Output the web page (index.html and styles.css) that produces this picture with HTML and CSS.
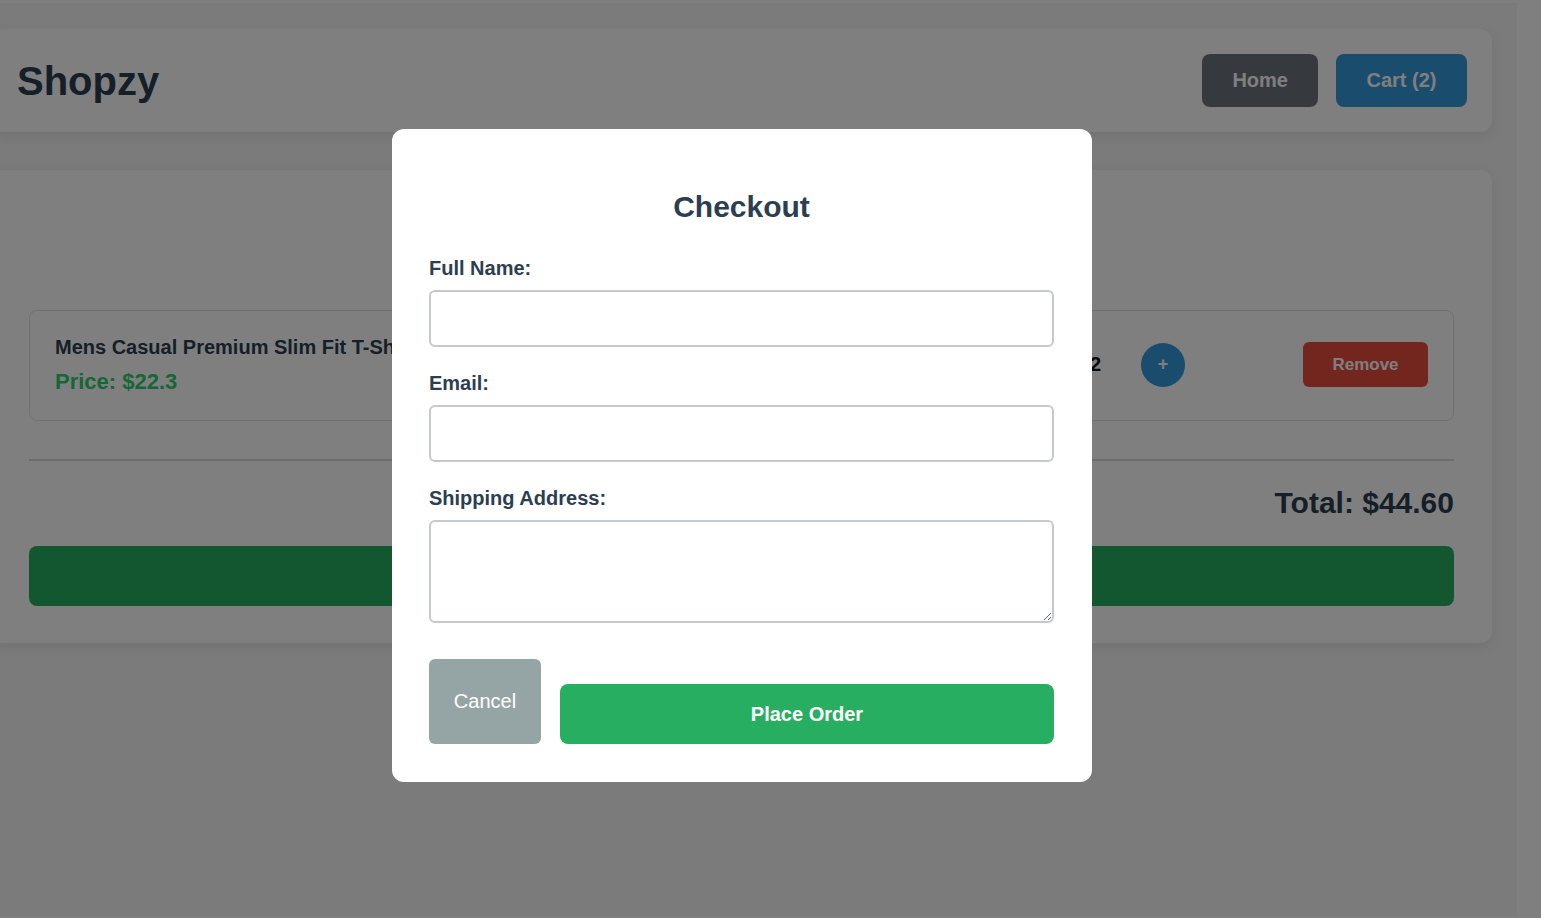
FILE: index.html
```html
<!DOCTYPE html>
<html lang="en">
<head>
<meta charset="utf-8">
<title>Shopzy - Cart</title>
<link rel="stylesheet" href="styles.css">
</head>
<body>
<div class="app">
  <div class="page">
    <header class="site-header">
      <h1 class="logo">Shopzy</h1>
      <nav class="nav">
        <button class="nav-btn nav-home">Home</button>
        <button class="nav-btn nav-cart">Cart (2)</button>
      </nav>
    </header>

    <main class="cart-card">
      <div class="cart-title-space"></div>
      <div class="cart-item">
        <div class="item-info">
          <div class="item-name">Mens Casual Premium Slim Fit T-Shirts</div>
          <div class="item-price">Price: $22.3</div>
        </div>
        <div class="item-actions">
          <div class="qty">
            <button class="qty-btn">−</button>
            <span class="qty-value">2</span>
            <button class="qty-btn">+</button>
          </div>
          <button class="remove-btn">Remove</button>
        </div>
      </div>
      <div class="cart-summary">
        <div class="total">Total: $44.60</div>
        <button class="checkout-btn">Proceed to Checkout</button>
      </div>
    </main>
  </div>
</div>

<div class="overlay">
  <div class="modal">
    <h2 class="modal-title">Checkout</h2>
    <div class="form-group">
      <label class="form-label" for="name">Full Name:</label>
      <input class="form-input" id="name" type="text">
    </div>
    <div class="form-group">
      <label class="form-label" for="email">Email:</label>
      <input class="form-input" id="email" type="email">
    </div>
    <div class="form-group">
      <label class="form-label" for="addr">Shipping Address:</label>
      <textarea class="form-textarea" id="addr"></textarea>
    </div>
    <div class="modal-actions">
      <button class="cancel-btn">Cancel</button>
      <button class="place-btn">Place Order</button>
    </div>
  </div>
</div>
</body>
</html>
```
FILE: styles.css
```css
html {
  background: #ffffff;
}
body {
  margin: 0;
  font-family: "Liberation Sans", Arial, sans-serif;
  color: #2c3e50;
  overflow: hidden;
}
.app {
  margin-top: 3px;
  width: 1517px;
  height: 913px;
  background: #f6f6f6;
  overflow: hidden;
}
.page {
  margin-left: -9px;
  width: 1501px;
  padding-top: 26px;
}
.site-header {
  display: flex;
  align-items: center;
  justify-content: space-between;
  background: #ffffff;
  border-radius: 12px;
  padding: 25px 25px 25px 26px;
  box-shadow: 0 4px 12px rgba(0, 0, 0, 0.08);
}
.logo {
  margin: 0;
  font-size: 40px;
  line-height: 46px;
  font-weight: bold;
  color: #2c3e50;
}
.nav {
  display: flex;
  gap: 18px;
}
.nav-btn {
  font-family: "Liberation Sans", Arial, sans-serif;
  font-size: 20px;
  line-height: 23px;
  font-weight: bold;
  color: #ffffff;
  border: none;
  border-radius: 8px;
  padding: 15px 30px;
}
.nav-home {
  background: #6c757d;
}
.nav-cart {
  background: #3498db;
  padding: 15px 30.5px;
}
.cart-card {
  display: block;
  margin-top: 38px;
  background: #ffffff;
  border-radius: 12px;
  padding: 38px 38px 37px 38px;
  box-shadow: 0 4px 12px rgba(0, 0, 0, 0.08);
}
.cart-title-space {
  height: 102px;
}
.cart-item {
  display: flex;
  align-items: center;
  justify-content: space-between;
  border: 1px solid #e2e2e2;
  border-radius: 8px;
  padding: 24.5px 25px 26.5px;
}
.item-name {
  font-size: 20px;
  line-height: 23px;
  font-weight: bold;
  color: #2c3e50;
}
.item-price {
  margin-top: 10px;
  font-size: 22px;
  line-height: 25px;
  font-weight: bold;
  color: #2ecc71;
}
.item-actions {
  display: flex;
  align-items: center;
}
.qty {
  display: flex;
  align-items: center;
  gap: 40px;
  margin-right: 118px;
}
.qty-value {
  font-size: 20px;
  font-weight: bold;
  color: #111111;
}
.qty-btn {
  width: 44px;
  height: 44px;
  border-radius: 50%;
  border: none;
  background: #3498db;
  color: #ffffff;
  font-family: "Liberation Sans", Arial, sans-serif;
  font-size: 18px;
  font-weight: bold;
  padding: 0;
}
.remove-btn {
  width: 125px;
  height: 45px;
  border: none;
  border-radius: 6px;
  background: #e74c3c;
  color: #ffffff;
  font-family: "Liberation Sans", Arial, sans-serif;
  font-size: 17px;
  font-weight: bold;
}
.cart-summary {
  margin-top: 38px;
  border-top: 2px solid #d6d9dd;
  padding-top: 25px;
}
.total {
  text-align: right;
  font-size: 30px;
  line-height: 34px;
  font-weight: bold;
  color: #2c3e50;
}
.checkout-btn {
  display: block;
  width: 100%;
  height: 60px;
  margin-top: 26px;
  border: none;
  border-radius: 8px;
  background: #27ae60;
  color: #ffffff;
  font-family: "Liberation Sans", Arial, sans-serif;
  font-size: 20px;
  font-weight: bold;
}

/* Modal */
.overlay {
  position: fixed;
  inset: 0;
  background: rgba(0, 0, 0, 0.5);
  display: flex;
  align-items: center;
  justify-content: center;
  padding: 0 57px 7px 0;
}
.modal {
  width: 700px;
  box-sizing: border-box;
  background: #ffffff;
  border-radius: 12px;
  padding: 38px 38px 38px 37px;
}
.modal-title {
  margin: 23px 0 33px;
  font-size: 30px;
  line-height: 34px;
  font-weight: bold;
  text-align: center;
  color: #2c3e50;
}
.form-group {
  margin-bottom: 25px;
}
.form-label {
  display: block;
  margin-bottom: 11px;
  font-size: 20px;
  line-height: 22px;
  font-weight: bold;
  color: #2c3e50;
}
.form-input,
.form-textarea {
  display: block;
  width: 100%;
  box-sizing: border-box;
  border: 2px solid #c5c9cd;
  border-radius: 6px;
  background: #ffffff;
  font-family: "Liberation Sans", Arial, sans-serif;
  font-size: 16px;
  padding: 10px 12px;
  margin: 0;
}
.form-input {
  height: 57px;
}
.form-textarea {
  height: 103px;
}
.modal-actions {
  display: flex;
  align-items: flex-end;
  gap: 19px;
  margin-top: 36px;
}
.cancel-btn {
  width: 112px;
  height: 85px;
  border: none;
  border-radius: 6px;
  background: #95a5a6;
  color: #ffffff;
  font-family: "Liberation Sans", Arial, sans-serif;
  font-size: 20px;
  padding: 0;
}
.place-btn {
  flex: 1;
  height: 60px;
  border: none;
  border-radius: 8px;
  background: #27ae60;
  color: #ffffff;
  font-family: "Liberation Sans", Arial, sans-serif;
  font-size: 20px;
  font-weight: bold;
}
```
